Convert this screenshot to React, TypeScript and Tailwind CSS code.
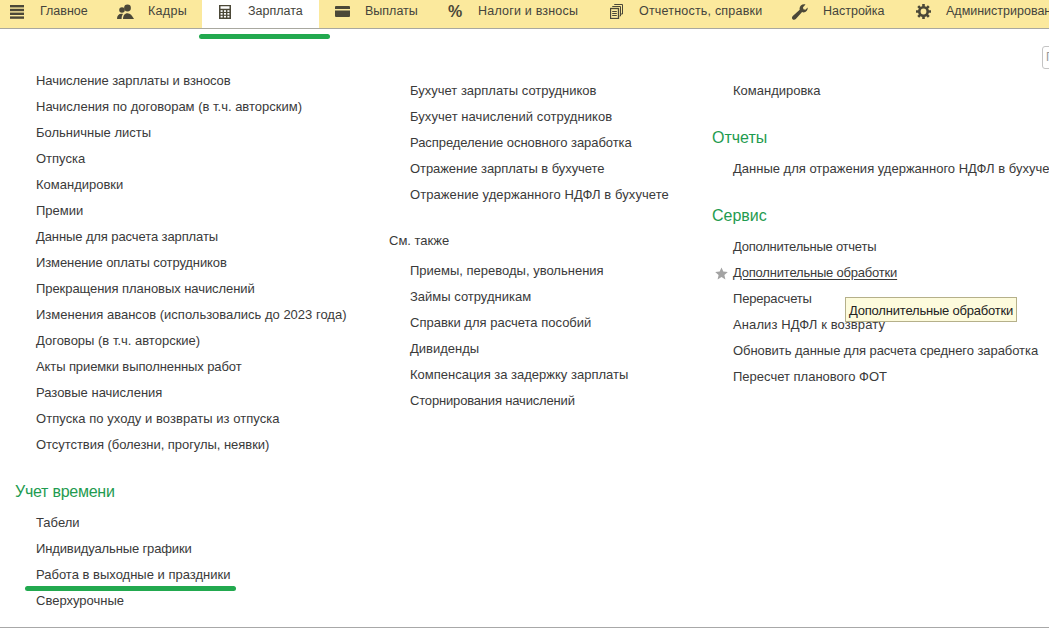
interface TabItem {
  label: string;
  width: string;
  icon: React.ReactNode;
  active?: boolean;
  spacing?: string;
}

const iconColor = '#4b4838';

function MenuIcon() {
  return (
    <svg width="14" height="14" viewBox="0 0 14 14" fill={iconColor}>
      <rect x="0" y="0" width="14" height="2.4" />
      <rect x="0" y="3.8" width="14" height="2.4" />
      <rect x="0" y="7.6" width="14" height="2.4" />
      <rect x="0" y="11.4" width="14" height="2.4" />
    </svg>
  );
}

function UsersIcon() {
  return (
    <svg width="17" height="16" viewBox="0 0 17 16" fill={iconColor}>
      <circle cx="10.5" cy="4" r="3.4" />
      <path d="M6 15c0-3.6 1.6-5.8 4.5-5.8S15 11.4 17 15z" />
      <circle cx="5" cy="6" r="2.8" />
      <path d="M0 15c0-3.2 1.6-5.2 4.6-5.2.6 0 1 .1 1.4.2C5 11.4 4.6 13 4.6 15z" />
    </svg>
  );
}

function CalcIcon() {
  return (
    <svg width="12" height="14" viewBox="0 0 12 14" fill={iconColor}>
      <path fillRule="evenodd" d="M0 0h12v14H0zM1.5 1.2v2.6h9V1.2z" />
      <g fill="#ffffff">
        <rect x="1.6" y="5.2" width="2" height="1.7" />
        <rect x="5" y="5.2" width="2" height="1.7" />
        <rect x="8.4" y="5.2" width="2" height="1.7" />
        <rect x="1.6" y="8" width="2" height="1.7" />
        <rect x="5" y="8" width="2" height="1.7" />
        <rect x="8.4" y="8" width="2" height="1.7" />
        <rect x="1.6" y="10.8" width="2" height="1.7" />
        <rect x="5" y="10.8" width="2" height="1.7" />
        <rect x="8.4" y="10.8" width="2" height="1.7" />
      </g>
    </svg>
  );
}

function CardIcon() {
  return (
    <svg width="15" height="11" viewBox="0 0 15 11" fill={iconColor}>
      <path fillRule="evenodd" d="M1 0h13a1 1 0 0 1 1 1v9a1 1 0 0 1-1 1H1a1 1 0 0 1-1-1V1a1 1 0 0 1 1-1zM0 3v1.6h15V3z" />
    </svg>
  );
}

function FilesIcon() {
  return (
    <svg width="13" height="15" viewBox="0 0 13 15" fill="none" stroke={iconColor} strokeWidth="1">
      <rect x="0.5" y="4.5" width="8" height="10" strokeWidth="1.3" />
      <path d="M2.2 7.5h4.6M2.2 9.5h4.6M2.2 11.5h4.6" />
      <path d="M2.5 3V2.5h8V12H9.5M4.5 1V.5h8V10H11" />
    </svg>
  );
}

function WrenchIcon() {
  return (
    <svg width="16" height="16" viewBox="0 0 16 16" fill={iconColor}>
      <path d="M15.6 3.4c.5 2.3-1.2 5-4 5-.6 0-1-.1-1.5-.3l-6.3 6.9c-.9 1-2.4 1-3.2.2-.9-.9-.8-2.300.2-3.200l6.900-6.200c-.8-2.800 1.400-5.500 4.500-5.500.5 0 .9.100 1.300.200L11 3.300l.4 2 2 .4z" />
    </svg>
  );
}

function GearIcon() {
  return (
    <svg width="15" height="15" viewBox="0 0 15 15">
      <circle cx="7.5" cy="7.500" r="4.200" fill="none" stroke={iconColor} strokeWidth="2.600" />
      <g stroke={iconColor} strokeWidth="2.600">
        <path d="M7.500 0v3M7.500 12v3M0 7.500h3M12 7.500h3M2.200 2.200l2 2M10.800 10.800l2 2M2.200 12.800l2-2M10.800 4.200l2-2" />
      </g>
    </svg>
  );
}

const tabs: TabItem[] = [
  { label: 'Главное', width: 'w-[108px] ml-[-6px]', icon: <MenuIcon /> },
  { label: 'Кадры', width: 'w-[100px]', icon: <UsersIcon />, spacing: 'tracking-[0.3px]' },
  { label: 'Зарплата', width: 'w-[117px]', icon: <CalcIcon />, active: true },
  { label: 'Выплаты', width: 'w-[113px]', icon: <CardIcon /> },
  { label: 'Налоги и взносы', width: 'w-[161px]', icon: <span className="text-[16px] font-bold leading-none">%</span>, spacing: 'tracking-[0.2px]' },
  { label: 'Отчетность, справки', width: 'w-[184px]', icon: <FilesIcon />, spacing: 'tracking-[0.2px]' },
  { label: 'Настройка', width: 'w-[123px]', icon: <WrenchIcon /> },
  { label: 'Администрирование', width: 'w-[180px]', icon: <GearIcon /> },
];

function Link({ text, underline, star, spacing }: { text: string; underline?: boolean; star?: boolean; spacing?: string }) {
  return (
    <div className={`relative h-[26px] leading-[26px] whitespace-nowrap ${spacing ?? ''}`}>
      {star && (
        <svg className="absolute left-[-18px] top-[7px]" width="13" height="13" viewBox="0 0 13 13" fill="#a3a3a3">
          <polygon points="6.5,0.500 8.300,4.600 12.800,5 9.400,8 10.400,12.500 6.500,10.100 2.600,12.500 3.600,8 0.200,5 4.700,4.600" />
        </svg>
      )}
      <span className={underline ? 'underline underline-offset-2' : ''}>{text}</span>
    </div>
  );
}

function Heading({ text, className }: { text: string; className: string }) {
  return <div className={`text-[16px] text-[#1f9b50] h-[26px] leading-[26px] whitespace-nowrap ${className}`}>{text}</div>;
}

export default function App() {
  return (
    <div className="relative w-[1049px] h-[628px] overflow-hidden bg-white text-[13px] text-[#3a3a3a] font-['Liberation_Sans',Arial,sans-serif]">
      {/* Top menu */}
      <div className="flex h-[29px] bg-[#fbe99d] border-b border-[#a8a8a0] overflow-hidden text-[12.5px] text-[#44443c]">
        {tabs.map(tab => (
          <div
            key={tab.label}
            className={`flex items-center shrink-0 h-[28px] pb-[5px] ${tab.width} ${tab.active ? 'bg-white' : ''}`}
          >
            <span className="w-[46px] flex justify-center text-[#4b4838] shrink-0">{tab.icon}</span>
            <span className={`whitespace-nowrap ${tab.spacing ?? ''}`}>{tab.label}</span>
          </div>
        ))}
      </div>

      {/* Columns */}
      <div className="flex h-[599px] border-b border-[#a8a8a8]">
        <div className="w-[389px] shrink-0 pl-[36px] pt-[39px]">
          <Link text="Начисление зарплаты и взносов" spacing="tracking-[-0.07px]" />
          <Link text="Начисления по договорам (в т.ч. авторским)" />
          <Link text="Больничные листы" />
          <Link text="Отпуска" />
          <Link text="Командировки" />
          <Link text="Премии" />
          <Link text="Данные для расчета зарплаты" spacing="tracking-[-0.1px]" />
          <Link text="Изменение оплаты сотрудников" spacing="tracking-[-0.1px]" />
          <Link text="Прекращения плановых начислений" spacing="tracking-[-0.06px]" />
          <Link text="Изменения авансов (использовались до 2023 года)" />
          <Link text="Договоры (в т.ч. авторские)" />
          <Link text="Акты приемки выполненных работ" spacing="tracking-[-0.1px]" />
          <Link text="Разовые начисления" />
          <Link text="Отпуска по уходу и возвраты из отпуска" spacing="tracking-[0.05px]" />
          <Link text="Отсутствия (болезни, прогулы, неявки)" spacing="tracking-[-0.05px]" />
          <Heading text="Учет времени" className="ml-[-21px] mt-[21px] mb-[5px] tracking-[-0.25px]" />
          <Link text="Табели" />
          <Link text="Индивидуальные графики" spacing="tracking-[-0.13px]" />
          <Link text="Работа в выходные и праздники" />
          <Link text="Сверхурочные" />
        </div>

        <div className="w-[323px] shrink-0 pt-[49px]">
          <div className="pl-[21px]">
            <Link text="Бухучет зарплаты сотрудников" />
            <Link text="Бухучет начислений сотрудников" spacing="tracking-[0.06px]" />
            <Link text="Распределение основного заработка" spacing="tracking-[-0.06px]" />
            <Link text="Отражение зарплаты в бухучете" spacing="tracking-[-0.07px]" />
            <Link text="Отражение удержанного НДФЛ в бухучете" spacing="tracking-[0.08px]" />
          </div>
          <div className="h-[26px] leading-[26px] mt-[20px] mb-[4px]">См. также</div>
          <div className="pl-[21px]">
            <Link text="Приемы, переводы, увольнения" />
            <Link text="Займы сотрудникам" />
            <Link text="Справки для расчета пособий" />
            <Link text="Дивиденды" />
            <Link text="Компенсация за задержку зарплаты" />
            <Link text="Сторнирования начислений" spacing="tracking-[-0.17px]" />
          </div>
        </div>

        <div className="flex-1 min-w-0 pt-[49px]">
          <div className="pl-[21px]">
            <Link text="Командировка" />
          </div>
          <Heading text="Отчеты" className="mt-[21px] mb-[5px]" />
          <div className="pl-[21px]">
            <Link text="Данные для отражения удержанного НДФЛ в бухучете" />
          </div>
          <Heading text="Сервис" className="mt-[21px] mb-[5px]" />
          <div className="pl-[21px]">
            <Link text="Дополнительные отчеты" spacing="tracking-[-0.24px]" />
            <Link text="Дополнительные обработки" underline star spacing="tracking-[-0.2px]" />
            <Link text="Перерасчеты" spacing="tracking-[-0.18px]" />
            <Link text="Анализ НДФЛ к возврату" spacing="tracking-[0.1px]" />
            <Link text="Обновить данные для расчета среднего заработка" spacing="tracking-[-0.06px]" />
            <Link text="Пересчет планового ФОТ" />
          </div>
        </div>
      </div>

      {/* Cut-off search field at the right edge */}
      <div className="absolute left-[1042px] top-[46px] w-[20px] h-[23px] pl-[3px] leading-[21px] text-[12px] text-[#999] border border-[#c4c4c4] rounded-[3px] bg-white">
        П
      </div>

      {/* Tooltip */}
      <div className="absolute left-[845px] top-[297px] h-[25px] pt-[1px] leading-[24px] px-[3px] bg-[#fdfbdc] border border-[#b5b08a] text-[#222] tracking-[-0.2px] whitespace-nowrap">
        Дополнительные обработки
      </div>

      {/* Green annotation marks */}
      <div className="absolute left-[199px] top-[34px] w-[131px] h-[5px] rounded-full bg-[#22a94f]" />
      <div className="absolute left-[25px] top-[586px] w-[211px] h-[5px] rounded-full bg-[#22a94f]" />
    </div>
  );
}
